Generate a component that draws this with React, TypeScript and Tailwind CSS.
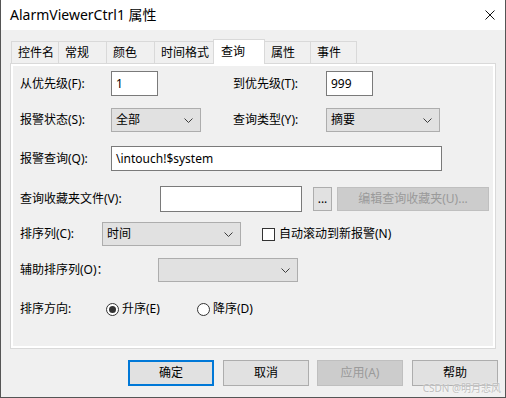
import React from "react";

const font = "font-['Noto_Sans','Noto_Sans_CJK_SC',sans-serif]";

// 下拉箭头
function Chevron() {
  return (
    <svg width="9" height="5" viewBox="0 0 9 5" className="shrink-0">
      <polyline points="0.5,0.5 4.5,4.5 8.5,0.5" fill="none" stroke="#3c3c3c" strokeWidth="1" />
    </svg>
  );
}

function Select({ w, text }: { w: string; text?: string }) {
  return (
    <div className={`${w} h-[24px] bg-[#e1e1e1] border border-[#adadad] flex items-center pl-[4px] pr-[7px]`}>
      <span className="text-[12px] leading-none flex-1">{text}</span>
      <Chevron />
    </div>
  );
}

function Input({ w, h, text }: { w: string; h: string; text?: string }) {
  return (
    <div className={`${w} ${h} bg-white border border-[#7a7a7a] flex items-center pl-[4px]`}>
      <span className="text-[12px] leading-none">{text}</span>
    </div>
  );
}

function Radio({ checked }: { checked?: boolean }) {
  return (
    <div className="w-[13px] h-[13px] rounded-full border border-[#333] bg-white flex items-center justify-center shrink-0">
      {checked && <div className="w-[7px] h-[7px] rounded-full bg-[#333]" />}
    </div>
  );
}

const tabs = [
  { name: "控件名", w: "w-[48px]" },
  { name: "常规", w: "w-[49px]" },
  { name: "颜色", w: "w-[49px]" },
  { name: "时间格式", w: "w-[60px]" },
  { name: "查询", w: "w-[52px]", active: true },
  { name: "属性", w: "w-[47px]" },
  { name: "事件", w: "w-[47px]" },
];

export default function App() {
  return (
    <div className={`${font} relative w-[506px] h-[398px] bg-[#f0f0f0] border-x border-b border-[#555] flex flex-col overflow-hidden text-black`}>
      {/* Titelleiste */}
      <div className="h-[30px] bg-white flex items-center pl-[9px] pr-[10px] shrink-0">
        <span className="text-[14px] leading-none">AlarmViewerCtrl1 属性</span>
        <svg width="10" height="10" viewBox="0 0 10 10" className="ml-auto">
          <path d="M0.5 0.5 L9.5 9.5 M9.5 0.5 L0.5 9.5" stroke="#111" strokeWidth="1" />
        </svg>
      </div>

      <div className="flex-1 pl-[9px] pt-[9px]">
        {/* Tabs */}
        <div className="h-[24px] flex items-end pl-[1px]">
          {tabs.map((t, i) =>
            t.active ? (
              <div
                key={i}
                className={`${t.w} h-[25px] -mb-px -ml-px relative z-10 bg-white border border-b-0 border-[#d9d9d9] flex items-center pl-[7px] text-[12px] leading-none`}
              >
                {t.name}
              </div>
            ) : (
              <div
                key={i}
                className={`${t.w} h-[22px] ${i > 0 ? "-ml-px" : ""} border border-b-0 border-[#d9d9d9] flex items-center pl-[6px] text-[12px] leading-none`}
              >
                {t.name}
              </div>
            )
          )}
        </div>

        {/* Panel */}
        <div className="w-[486px] h-[286px] border border-[#d9d9d9]">
          <div className="h-full border-2 border-white pt-[5px] pl-[7px] text-[12px] leading-none">
            <div className="flex items-center h-[25px]">
              <span className="w-[91px]">从优先级(F):</span>
              <Input w="w-[47px]" h="h-[25px]" text="1" />
              <span className="ml-[75px] w-[93px]">到优先级(T):</span>
              <Input w="w-[47px]" h="h-[25px]" text="999" />
            </div>

            <div className="flex items-center h-[24px] mt-[12px]">
              <span className="w-[91px]">报警状态(S):</span>
              <Select w="w-[90px]" text="全部" />
              <span className="ml-[32px] w-[93px]">查询类型(Y):</span>
              <Select w="w-[114px]" text="摘要" />
            </div>

            <div className="flex items-center h-[25px] mt-[14px]">
              <span className="w-[91px]">报警查询(Q):</span>
              <Input w="w-[331px]" h="h-[25px]" text="\intouch!$system" />
            </div>

            <div className="flex items-center h-[26px] mt-[15px]">
              <span className="w-[140px]">查询收藏夹文件(V):</span>
              <Input w="w-[142px]" h="h-[26px]" />
              <div className="ml-[11px] w-[19px] h-[24px] bg-[#e1e1e1] border border-[#adadad] flex items-center justify-center">
                ...
              </div>
              <div className="ml-[5px] w-[152px] h-[24px] bg-[#cccccc] border border-[#bfbfbf] flex items-center justify-center text-[#9a9a9a]">
                编辑查询收藏夹(U)...
              </div>
            </div>

            <div className="flex items-center h-[24px] mt-[10px]">
              <span className="w-[82px]">排序列(C):</span>
              <Select w="w-[139px]" text="时间" />
              <div className="ml-[21px] w-[13px] h-[13px] border border-[#333] bg-white" />
              <span className="ml-[4px]">自动滚动到新报警(N)</span>
            </div>

            <div className="flex items-center h-[24px] mt-[12px]">
              <span className="w-[138px]">辅助排序列(O)：</span>
              <Select w="w-[140px]" />
            </div>

            <div className="flex items-center h-[24px] mt-[15px]">
              <span className="w-[86px]">排序方向:</span>
              <Radio checked />
              <span className="ml-[3px] w-[75px]">升序(E)</span>
              <Radio />
              <span className="ml-[3px]">降序(D)</span>
            </div>
          </div>
        </div>

        {/* Buttons */}
        <div className="flex mt-[11px] pl-[118px] text-[12px] leading-none">
          <div className="w-[86px] h-[26px] bg-[#e1e1e1] border-2 border-[#0078d7] flex items-center justify-center">确定</div>
          <div className="ml-[9px] w-[86px] h-[26px] bg-[#e1e1e1] border border-[#adadad] flex items-center justify-center">取消</div>
          <div className="ml-[8px] w-[86px] h-[26px] bg-[#cccccc] border border-[#bfbfbf] flex items-center justify-center text-[#9a9a9a]">应用(A)</div>
          <div className="ml-[9px] w-[86px] h-[26px] bg-[#e1e1e1] border border-[#adadad] flex items-center justify-center">帮助</div>
        </div>
      </div>

      {/* Wasserzeichen */}
      <span className="absolute right-[4px] bottom-[4px] text-[10px] leading-none text-[#bdbdbd] [text-shadow:0_0_2px_#fff]">
        CSDN @明月悲风
      </span>
    </div>
  );
}
